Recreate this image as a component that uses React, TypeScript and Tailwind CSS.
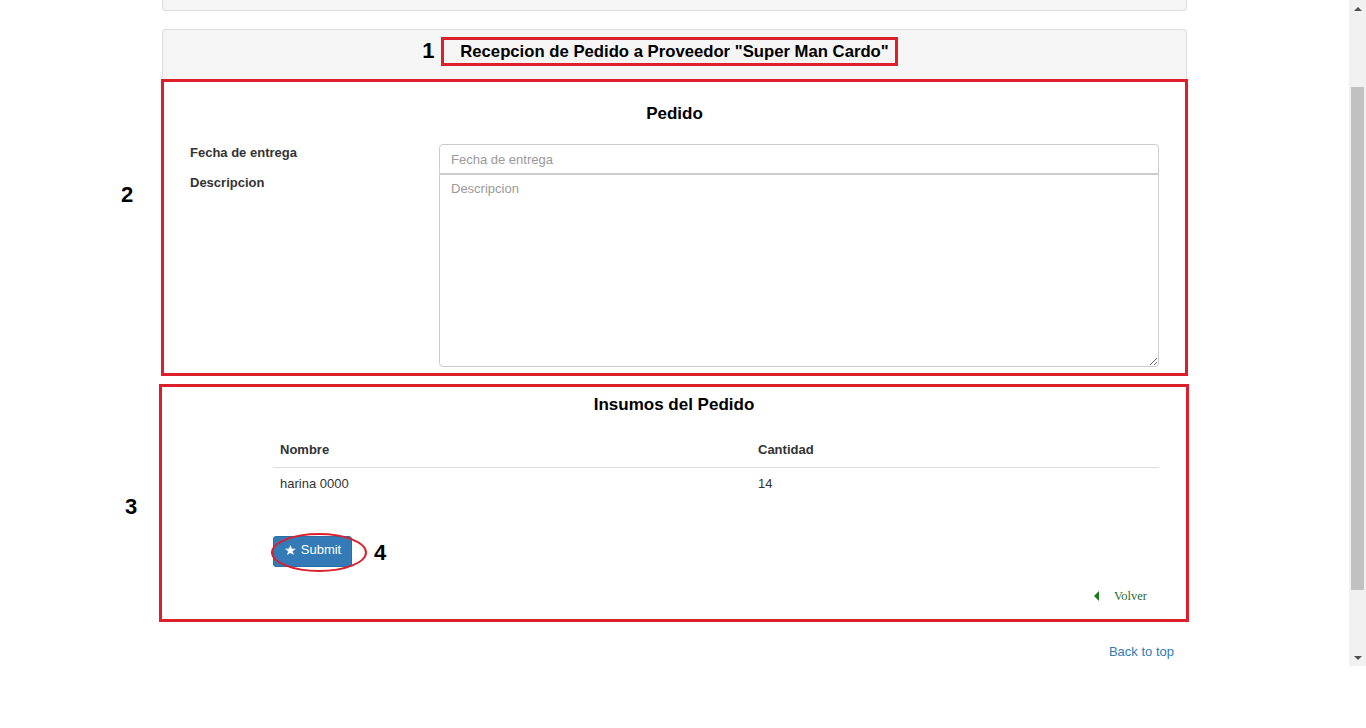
import React from "react";

const RED = "border-[#dc1f2b]";

function Marker({ n, className }: { n: string; className: string }) {
  return (
    <span className={`absolute text-[22px] font-bold leading-none text-black ${className}`}>{n}</span>
  );
}

function Scrollbar() {
  return (
    <div className="flex h-[666px] w-[17px] shrink-0 flex-col bg-[#f1f1f1]">
      <div className="flex h-[17px] items-center justify-center">
        <div className="h-0 w-0 border-x-[4px] border-b-[4px] border-x-transparent border-b-[#505050]" />
      </div>
      <div className="h-[70px]" />
      <div className="mx-[2px] h-[503px] bg-[#c1c1c1]" />
      <div className="flex-1" />
      <div className="flex h-[17px] items-center justify-center">
        <div className="h-0 w-0 border-x-[4px] border-t-[4px] border-x-transparent border-t-[#505050]" />
      </div>
    </div>
  );
}

function PedidoForm() {
  return (
    <section className={`relative -mx-px h-[297px] border-[3px] ${RED} bg-white`}>
      <Marker n="2" className="left-[-43px] top-[102px]" />
      <h3 className="pt-[20px] text-center text-[17px] font-bold leading-[24px] text-black">Pedido</h3>
      <div className="mt-[18px] grid grid-cols-[249px_720px] pl-[26px]">
        <label className="pt-px text-[13px] font-bold leading-[16px] text-[#333]">Fecha de entrega</label>
        <input
          placeholder="Fecha de entrega"
          className="h-[30px] rounded-t-[4px] border border-[#ccc] px-[11px] text-[13px] text-[#555] placeholder:text-[#999] outline-none"
        />
        <label className="pt-px text-[13px] font-bold leading-[16px] text-[#333]">Descripcion</label>
        <textarea
          placeholder="Descripcion"
          className="h-[193px] rounded-b-[4px] border border-[#ccc] px-[11px] py-[4px] text-[13px] text-[#555] placeholder:text-[#999] outline-none"
        />
      </div>
    </section>
  );
}

function Insumos() {
  const rows = [{ nombre: "harina 0000", cantidad: 14 }];
  return (
    <section className={`relative -ml-[3px] -mr-[2px] mt-[8px] h-[238px] border-[3px] ${RED} bg-white`}>
      <Marker n="3" className="left-[-37px] top-[109px]" />
      <h3 className="pt-[6px] text-center text-[17px] font-bold leading-[24px] text-black">Insumos del Pedido</h3>
      <div className="pl-[111px] pr-[27px]">
        <div className="mt-[16px] grid grid-cols-[478px_1fr] border-b border-[#ddd] text-[13px] font-bold leading-[18px] text-[#333]">
          <div className="px-[7px] py-2">Nombre</div>
          <div className="px-[7px] py-2">Cantidad</div>
        </div>
        {rows.map((r) => (
          <div key={r.nombre} className="grid grid-cols-[478px_1fr] text-[13px] leading-[18px] text-[#333]">
            <div className="px-[7px] pb-2 pt-[7px]">{r.nombre}</div>
            <div className="px-[7px] pb-2 pt-[7px]">{r.cantidad}</div>
          </div>
        ))}
        <div className="relative mt-[35px] inline-flex">
          <button className="flex h-[31px] w-[79px] items-center justify-center gap-[4px] rounded-[3px] border border-[#2e6da4] bg-[#337ab7] pb-[3px] text-[13px] text-white">
            <span className="text-[14px] leading-none">★</span>
            Submit
          </button>
          <span className={`pointer-events-none absolute left-[-2px] top-[-3px] h-[39px] w-[96px] rounded-[50%] border-2 ${RED}`} />
          <Marker n="4" className="left-[101px] top-[6px]" />
        </div>
        <div className="mt-[20px] flex items-center justify-end gap-[15px] pr-[12px]">
          <div className="h-0 w-0 border-y-[5px] border-r-[5px] border-y-transparent border-r-[#1b7a1b]" />
          <a className="text-[12.5px] leading-[18px] text-[#2a6e2a] [font-family:'Liberation_Serif',serif]">Volver</a>
        </div>
      </div>
    </section>
  );
}

export default function App() {
  return (
    <div className="flex h-[728px] w-[1366px] items-start overflow-hidden bg-white [font-family:'Liberation_Sans',Arial,sans-serif]">
      <main className="h-[666px] flex-1">
        <div className="mx-auto w-[1025px]">
          <div className="h-[11px] rounded-b-[4px] border-x border-b border-[#ddd] bg-[#f5f5f5]" />
          <div className="mt-[18px] flex h-[50px] justify-center rounded-t-[4px] border-x border-t border-[#ddd] bg-[#f5f5f5] pt-[7px]">
            <div className={`relative -ml-[10px] h-[29px] border-[3px] ${RED} pl-[16px] pr-[6px]`}>
              <Marker n="1" className="left-[-22px] top-0" />
              <h2 className="text-[16.7px] font-bold leading-[23px] text-black">
                Recepcion de Pedido a Proveedor "Super Man Cardo"
              </h2>
            </div>
          </div>
          <PedidoForm />
          <Insumos />
          <div className="mt-[17px] pr-[13px] text-right">
            <a href="#" className="text-[13px] leading-[18px] text-[#337ab7]">Back to top</a>
          </div>
        </div>
      </main>
      <Scrollbar />
    </div>
  );
}
